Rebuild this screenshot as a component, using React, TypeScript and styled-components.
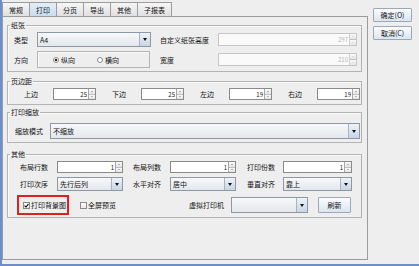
import React from "react";
import styled, { createGlobalStyle, css } from "styled-components";

const GlobalStyle = createGlobalStyle`
  html, body {
    margin: 0;
    padding: 0;
    background: #eeeeee;
  }
  body {
    font-family: "Noto Sans CJK SC", "Noto Sans", sans-serif;
    font-size: 7px;
    color: #111111;
  }
`;

const tabs = ["常规", "打印", "分页", "导出", "其他", "子报表"];

const Window = styled.div`
  box-sizing: border-box;
  width: 419px;
  height: 266px;
  display: flex;
  background: #eeeeee;
  border-left: 2px solid #6d8fc4;
  border-bottom: 2px solid #6d8fc4;
`;

const Main = styled.div`
  width: 366px;
  padding-top: 2px;
  display: flex;
  flex-direction: column;
`;

const TabBar = styled.div`
  display: flex;
  height: 14px;
`;

const Tab = styled.div<{ $active?: boolean }>`
  box-sizing: border-box;
  height: 14px;
  padding: 0 6px;
  display: flex;
  align-items: center;
  line-height: 8px;
  border: 1px solid #9c9c9c;
  border-bottom: none;
  margin-right: -1px;
  background: linear-gradient(#f6f6f6, #e0e0e0);
  ${(p) =>
    p.$active &&
    css`
      background: linear-gradient(#e4eefa, #c9dcf0);
      position: relative;
      z-index: 1;
    `}
`;

const Panel = styled.div`
  box-sizing: border-box;
  height: 244px;
  border: 1px solid #9c9c9c;
  padding: 4px 5px 0 4px;
  display: flex;
  flex-direction: column;
`;

const Group = styled.fieldset<{ $mt?: number }>`
  margin: ${(p) => p.$mt ?? 0}px 0 0 0;
  padding: 0;
  border: 1px solid #b4b4b4;
  box-shadow: inset 1px 1px 0 #fafafa;
  min-width: 0;
`;

const Legend = styled.legend`
  margin-left: 2px;
  padding: 0 1px;
  font-size: 7px;
  line-height: 8px;
`;

const Body = styled.div<{ $pt: number; $pb: number; $pl: number; $gap?: number }>`
  padding: ${(p) => p.$pt}px 0 ${(p) => p.$pb}px ${(p) => p.$pl}px;
  display: flex;
  flex-direction: column;
  gap: ${(p) => p.$gap ?? 0}px;
`;

const Row = styled.div<{ $gap?: number }>`
  display: flex;
  align-items: center;
  gap: ${(p) => p.$gap ?? 0}px;
`;

const Label = styled.span<{ $w: number }>`
  width: ${(p) => p.$w}px;
  flex: none;
  white-space: nowrap;
  line-height: 8px;
`;

const FieldBox = styled.div<{ $w: number; $h: number; $disabled?: boolean }>`
  box-sizing: border-box;
  width: ${(p) => p.$w}px;
  height: ${(p) => p.$h}px;
  flex: none;
  display: flex;
  border: 1px solid ${(p) => (p.$disabled ? "#c6c6c6" : "#8a8a8a")};
  background: ${(p) => (p.$disabled ? "#fafafa" : "#ffffff")};
`;

const FieldValue = styled.span<{ $disabled?: boolean }>`
  flex: 1;
  text-align: right;
  align-self: center;
  padding-right: 1px;
  font-size: 6px;
  line-height: 7px;
  color: ${(p) => (p.$disabled ? "#b8b8b8" : "#1a1a1a")};
`;

const SpinButtons = styled.div<{ $disabled?: boolean }>`
  width: 6px;
  display: flex;
  flex-direction: column;
  border-left: 1px solid ${(p) => (p.$disabled ? "#d0d0d0" : "#a8a8a8")};
`;

const SpinButton = styled.div<{ $disabled?: boolean; $down?: boolean }>`
  flex: 1;
  display: flex;
  align-items: center;
  justify-content: center;
  background: linear-gradient(#fbfbfb, #e4e4e4);
  ${(p) => p.$down && "border-top: 1px solid #c0c0c0;"}
  &::after {
    content: "";
    border-left: 1.5px solid transparent;
    border-right: 1.5px solid transparent;
    ${(p) =>
      p.$down
        ? `border-top: 1.5px solid ${p.$disabled ? "#c8c8c8" : "#707070"};`
        : `border-bottom: 1.5px solid ${p.$disabled ? "#c8c8c8" : "#707070"};`}
  }
`;

const Spinner = ({
  w,
  h,
  value,
  disabled,
}: {
  w: number;
  h: number;
  value: string;
  disabled?: boolean;
}) => (
  <FieldBox $w={w} $h={h} $disabled={disabled}>
    <FieldValue $disabled={disabled}>{value}</FieldValue>
    <SpinButtons $disabled={disabled}>
      <SpinButton $disabled={disabled} />
      <SpinButton $disabled={disabled} $down />
    </SpinButtons>
  </FieldBox>
);

const ComboBox = styled.div<{ $w: number; $h: number }>`
  box-sizing: border-box;
  width: ${(p) => p.$w}px;
  height: ${(p) => p.$h}px;
  flex: none;
  display: flex;
  border: 1px solid #8d98a4;
  background: linear-gradient(#f7f8fa, #e3e7ec);
`;

const ComboText = styled.span`
  flex: 1;
  align-self: center;
  padding-left: 2px;
  line-height: 8px;
`;

const ComboArrow = styled.div`
  width: 10px;
  display: flex;
  align-items: center;
  justify-content: center;
  border-left: 1px solid #a8b3bf;
  background: linear-gradient(#eef3f9, #c8d5e3);
  &::after {
    content: "";
    border-left: 2.5px solid transparent;
    border-right: 2.5px solid transparent;
    border-top: 3px solid #111;
  }
`;

const Combo = ({ w, h, text }: { w: number; h: number; text?: string }) => (
  <ComboBox $w={w} $h={h}>
    <ComboText>{text}</ComboText>
    <ComboArrow />
  </ComboBox>
);

const RadioGroupBox = styled.div`
  box-sizing: border-box;
  width: 113px;
  height: 17px;
  flex: none;
  display: flex;
  align-items: center;
  padding-left: 15px;
  gap: 22px;
  border: 1px solid #b4b4b4;
  box-shadow: inset 1px 1px 0 #fafafa;
`;

const RadioItem = styled.label`
  display: flex;
  align-items: center;
  gap: 2px;
  line-height: 8px;
`;

const RadioDot = styled.span<{ $on?: boolean }>`
  box-sizing: border-box;
  width: 6px;
  height: 6px;
  border-radius: 50%;
  border: 1px solid #8a8a8a;
  background: ${(p) =>
    p.$on ? "radial-gradient(circle, #222 0 1.3px, #fff 1.6px)" : "#fff"};
`;

const CheckItem = styled.label<{ $boxed?: boolean }>`
  box-sizing: border-box;
  flex: none;
  display: flex;
  align-items: center;
  gap: 1px;
  line-height: 8px;
  height: 20px;
  white-space: nowrap;
  ${(p) =>
    p.$boxed &&
    css`
      border: 2px solid #e0201c;
      padding: 0 3px 0 4px;
      width: 52px;
    `}
`;

const CheckBox = styled.span`
  box-sizing: border-box;
  flex: none;
  width: 7px;
  height: 7px;
  border: 1px solid #8a8a8a;
  background: linear-gradient(#fdfdfd, #e8e8e8);
  display: flex;
  align-items: center;
  justify-content: center;
`;

const Button = styled.div<{ $w: number; $h: number }>`
  box-sizing: border-box;
  flex: none;
  width: ${(p) => p.$w}px;
  height: ${(p) => p.$h}px;
  display: flex;
  align-items: center;
  justify-content: center;
  border: 1px solid #9ba8b6;
  border-radius: 1px;
  line-height: 8px;
  white-space: nowrap;
  background: linear-gradient(#fbfcfe, #dbe5f0);
`;

const Side = styled.div`
  padding: 8px 0 0 5px;
  display: flex;
  flex-direction: column;
  gap: 4px;
`;

const Check = ({ on }: { on?: boolean }) => (
  <CheckBox>
    {on && (
      <svg width="5" height="5" viewBox="0 0 5 5">
        <path d="M0.6 2.6 L2 4 L4.5 0.8" fill="none" stroke="#111" strokeWidth="1.1" />
      </svg>
    )}
  </CheckBox>
);

export default function App() {
  return (
    <>
      <GlobalStyle />
      <Window>
        <Main>
          <TabBar>
            {tabs.map((t) => (
              <Tab key={t} $active={t === "打印"}>
                {t}
              </Tab>
            ))}
          </TabBar>
          <Panel>
            <Group>
              <Legend>纸张</Legend>
              <Body $pt={3} $pb={3} $pl={6} $gap={4}>
                <Row>
                  <Label $w={23}>类型</Label>
                  <Combo w={114} h={15} text="A4" />
                  <Label $w={58} style={{ marginLeft: 9 }}>
                    自定义纸张高度
                  </Label>
                  <Spinner w={139} h={13} value="297" disabled />
                </Row>
                <Row>
                  <Label $w={23}>方向</Label>
                  <RadioGroupBox>
                    <RadioItem>
                      <RadioDot $on />
                      纵向
                    </RadioItem>
                    <RadioItem>
                      <RadioDot />
                      横向
                    </RadioItem>
                  </RadioGroupBox>
                  <Label $w={58} style={{ marginLeft: 10 }}>
                    宽度
                  </Label>
                  <Spinner w={139} h={13} value="210" disabled />
                </Row>
              </Body>
            </Group>

            <Group $mt={5}>
              <Legend>页边距</Legend>
              <Body $pt={3} $pb={4} $pl={16}>
                <Row $gap={16}>
                  {[
                    ["上边", "25"],
                    ["下边", "25"],
                    ["左边", "19"],
                    ["右边", "19"],
                  ].map(([l, v]) => (
                    <Row key={l}>
                      <Label $w={29}>{l}</Label>
                      <Spinner w={43} h={12} value={v} />
                    </Row>
                  ))}
                </Row>
              </Body>
            </Group>

            <Group $mt={3}>
              <Legend>打印缩放</Legend>
              <Body $pt={7} $pb={3} $pl={7}>
                <Row>
                  <Label $w={35}>缩放模式</Label>
                  <Combo w={310} h={16} text="不缩放" />
                </Row>
              </Body>
            </Group>

            <Group $mt={7}>
              <Legend>其他</Legend>
              <Body $pt={3} $pb={2} $pl={12} $gap={4}>
                <Row $gap={10}>
                  <Row>
                    <Label $w={37}>布局行数</Label>
                    <Spinner w={66} h={12} value="1" />
                  </Row>
                  <Row>
                    <Label $w={37}>布局列数</Label>
                    <Spinner w={66} h={12} value="1" />
                  </Row>
                  <Row style={{ marginLeft: 1 }}>
                    <Label $w={36}>打印份数</Label>
                    <Spinner w={69} h={12} value="1" />
                  </Row>
                </Row>
                <Row $gap={10}>
                  <Row>
                    <Label $w={37}>打印次序</Label>
                    <Combo w={66} h={14} text="先行后列" />
                  </Row>
                  <Row>
                    <Label $w={37}>水平对齐</Label>
                    <Combo w={66} h={14} text="居中" />
                  </Row>
                  <Row style={{ marginLeft: 1 }}>
                    <Label $w={36}>垂直对齐</Label>
                    <Combo w={69} h={14} text="靠上" />
                  </Row>
                </Row>
                <Row style={{ marginLeft: -3 }}>
                  <CheckItem $boxed>
                    <Check on />
                    打印背景图
                  </CheckItem>
                  <CheckItem style={{ marginLeft: 11 }}>
                    <Check />
                    全屏预览
                  </CheckItem>
                  <Label $w={42} style={{ marginLeft: 73 }}>
                    虚拟打印机
                  </Label>
                  <Combo w={77} h={16} />
                  <Button $w={33} $h={16} style={{ marginLeft: 10 }}>
                    刷新
                  </Button>
                </Row>
              </Body>
            </Group>
          </Panel>
        </Main>
        <Side>
          <Button $w={39} $h={14}>确定(O)</Button>
          <Button $w={39} $h={14}>取消(C)</Button>
        </Side>
      </Window>
    </>
  );
}
